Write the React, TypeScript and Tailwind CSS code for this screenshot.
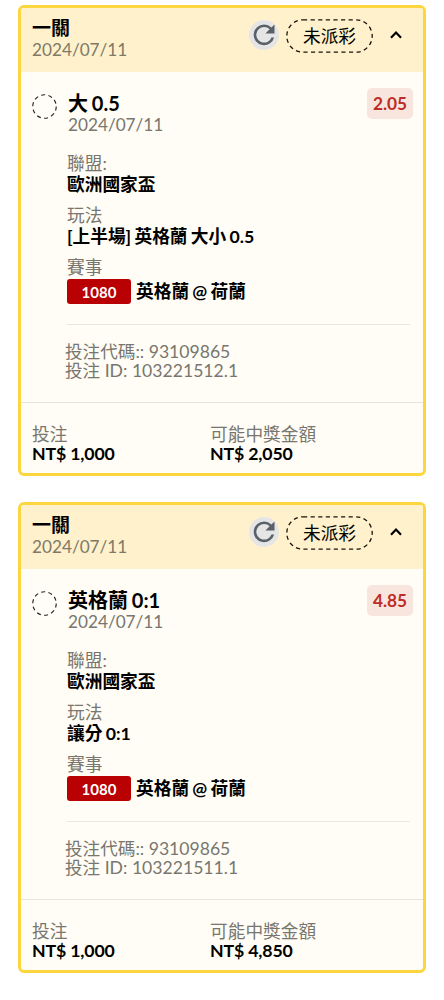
import { ReactNode } from 'react';

interface Bet {
  pick: string;
  odds: string;
  market: string;
  betId: string;
  payout: string;
}

const bets: Bet[] = [
  {
    pick: '大 0.5',
    odds: '2.05',
    market: '[上半場] 英格蘭 大小 0.5',
    betId: '103221512.1',
    payout: 'NT$ 2,050',
  },
  {
    pick: '英格蘭 0:1',
    odds: '4.85',
    market: '讓分 0:1',
    betId: '103221511.1',
    payout: 'NT$ 4,850',
  },
];

function RefreshIcon() {
  return (
    <svg viewBox="0 0 30 30" className="w-[30px] h-[30px] shrink-0 -mt-[2px]">
      <circle cx="15" cy="15" r="15" fill="#e5e5e5" />
      <path
        transform="translate(-0.5 -0.8) scale(1.3)"
        fill="#596067"
        d="M17.65 6.35A7.96 7.96 0 0 0 12 4a8 8 0 1 0 7.73 10h-2.08A6 6 0 1 1 12 6c1.66 0 3.14.69 4.22 1.78L13 11h7V4z"
      />
    </svg>
  );
}

function StatusPill() {
  return (
    <div className="relative ml-[7px] w-[87px] h-[34px] flex items-center justify-center">
      <svg viewBox="0 0 87 34" className="absolute inset-0 w-full h-full">
        <rect
          x="0.8"
          y="0.8"
          width="85.4"
          height="32.4"
          rx="16.2"
          fill="none"
          stroke="#17140c"
          strokeWidth="1.3"
          strokeDasharray="4.2 3.4"
        />
      </svg>
      <span className="pt-[3px] text-[17.7px] leading-[20px]">未派彩</span>
    </div>
  );
}

function Field({ label, children }: { label: string; children: ReactNode }) {
  return (
    <div className="mb-[9px]">
      <div className="h-[21px] leading-[21px] text-[#78766f]">{label}</div>
      <div className="min-h-[22px] flex items-center leading-[22px] font-bold whitespace-pre [word-spacing:-1px]">
        {children}
      </div>
    </div>
  );
}

function BetCard({ bet }: { bet: Bet }) {
  return (
    <article className="h-[471px] flex flex-col rounded-[6px] border-3 border-[#fdd63f] bg-[#fffdf5] overflow-hidden">
      <header className="h-[64px] shrink-0 flex justify-between bg-[#fff1cb] pl-[11px] pr-[20px]">
        <div className="pt-[9px]">
          <h2 className="text-[19px] leading-[22px] font-bold">一關</h2>
          <p className="text-[17.2px] leading-[21px] text-[#807967]">2024/07/11</p>
        </div>
        <div className="h-[34px] mt-[10.5px] flex items-center">
          <RefreshIcon />
          <StatusPill />
          <svg viewBox="0 0 14 10" className="ml-[16px] -mt-[2px] w-[14px] h-[10px]">
            <path d="M2 7.8L7 2.6L12 7.8" fill="none" stroke="#000" strokeWidth="2.2" />
          </svg>
        </div>
      </header>

      <section className="h-[331px] shrink-0 flex pl-[11px] pr-[13px] border-b border-[#e5e5de]">
        <svg viewBox="0 0 26 26" className="w-[25px] h-[25px] mt-[22px] shrink-0">
          <circle cx="13" cy="13" r="12.2" fill="none" stroke="#222" strokeWidth="1.2" strokeDasharray="4.2 3.46" />
        </svg>
        <div className="flex-1 ml-[10px]">
          <div className="flex justify-between">
            <div className="pt-[20px] pl-[1px]">
              <h3 className="text-[20px] leading-[23px] font-bold [word-spacing:-1px]">{bet.pick}</h3>
              <p className="text-[17.2px] leading-[20px] text-[#78766f]">2024/07/11</p>
            </div>
            <span className="mt-[16px] -mr-[3px] w-[46px] h-[31px] rounded-[5px] bg-[#f8e5de] flex items-center justify-center text-[17.3px] font-bold text-[#bd2d25]">
              {bet.odds}
            </span>
          </div>

          <div className="pt-[18px]">
            <Field label="聯盟:">歐洲國家盃</Field>
            <Field label="玩法">{bet.market}</Field>
            <Field label="賽事">
              <span className="w-[64px] h-[25px] mt-[1px] mb-px mr-[5px] rounded-[3px] bg-[#b90003] text-white text-[15px] flex items-center justify-center">
                1080
              </span>
              英格蘭 @ 荷蘭
            </Field>
          </div>

          <div className="mt-[19px] border-t border-[#e8e8e1] pt-[17px] text-[17.6px] text-[#78766f] leading-[19px]">
            <p className="-ml-[2px]">投注代碼:: 93109865</p>
            <p className="-ml-[2px]">投注 ID: {bet.betId}</p>
          </div>
        </div>
      </section>

      <footer className="flex pl-[11px] pt-[22px] leading-[19px]">
        <div className="w-[178px]">
          <p className="text-[#78766f]">投注</p>
          <p className="font-bold tracking-[-0.15px]">NT$ 1,000</p>
        </div>
        <div>
          <p className="text-[#78766f]">可能中獎金額</p>
          <p className="font-bold tracking-[-0.15px]">{bet.payout}</p>
        </div>
      </footer>
    </article>
  );
}

export default function App() {
  return (
    <main className="w-[444px] h-[1000px] bg-white pt-[5px] pl-[18px] pr-[18px] flex flex-col gap-[26px] overflow-hidden text-black text-[17.7px] font-[Lato,'Noto_Sans_CJK_TC',sans-serif]">
      {bets.map((bet) => (
        <BetCard key={bet.betId} bet={bet} />
      ))}
    </main>
  );
}
